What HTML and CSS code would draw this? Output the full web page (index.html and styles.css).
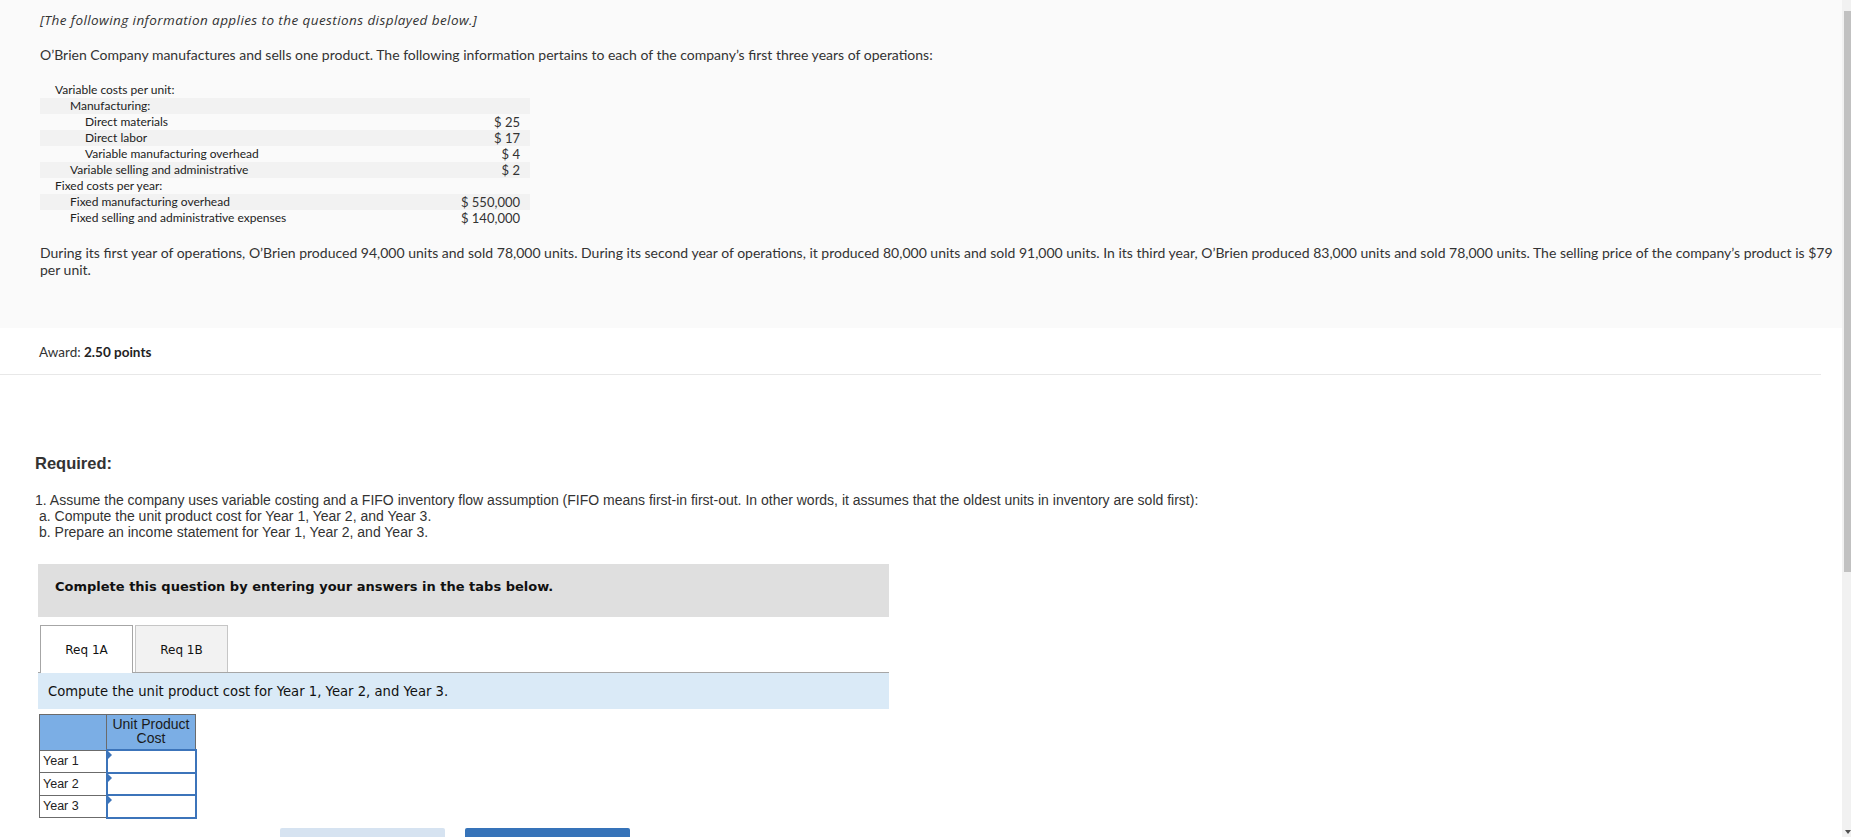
FILE: index.html
```html
<!DOCTYPE html>
<html lang="en">
<head>
<meta charset="utf-8">
<title>O'Brien Company</title>
<link rel="stylesheet" href="styles.css">
</head>
<body>
<div class="page">
  <section class="intro">
    <p class="note">[The following information applies to the questions displayed below.]</p>
    <p class="lead">O’Brien Company manufactures and sells one product. The following information pertains to each of the company’s first three years of operations:</p>
    <table class="costs">
      <tr><td class="l0">Variable costs per unit:</td><td class="val"></td></tr>
      <tr class="shade"><td class="l1">Manufacturing:</td><td class="val"></td></tr>
      <tr><td class="l2">Direct materials</td><td class="val">$ 25</td></tr>
      <tr class="shade"><td class="l2">Direct labor</td><td class="val">$ 17</td></tr>
      <tr><td class="l2">Variable manufacturing overhead</td><td class="val">$ 4</td></tr>
      <tr class="shade"><td class="l1">Variable selling and administrative</td><td class="val">$ 2</td></tr>
      <tr><td class="l0">Fixed costs per year:</td><td class="val"></td></tr>
      <tr class="shade"><td class="l1">Fixed manufacturing overhead</td><td class="val">$ 550,000</td></tr>
      <tr><td class="l1">Fixed selling and administrative expenses</td><td class="val">$ 140,000</td></tr>
    </table>
    <p class="story">During its first year of operations, O’Brien produced 94,000 units and sold 78,000 units. During its second year of operations, it produced 80,000 units and sold 91,000 units. In its third year, O’Brien produced 83,000 units and sold 78,000 units. The selling price of the company’s product is $79 per unit.</p>
  </section>

  <div class="award">Award: <b>2.50 points</b></div>

  <section class="question">
    <h3 class="req-title">Required:</h3>
    <p class="req-text">1. Assume the company uses variable costing and a FIFO inventory flow assumption (FIFO means first-in first-out. In other words, it assumes that the oldest units in inventory are sold first):<br><span class="sub">a. Compute the unit product cost for Year 1, Year 2, and Year 3.</span><br><span class="sub">b. Prepare an income statement for Year 1, Year 2, and Year 3.</span></p>

    <div class="widget">
      <div class="instr">Complete this question by entering your answers in the tabs below.</div>
      <div class="tabs">
        <div class="tab active">Req 1A</div>
        <div class="tab">Req 1B</div>
      </div>
      <div class="prompt">Compute the unit product cost for Year 1, Year 2, and Year 3.</div>
      <table class="answer">
        <tr class="head"><th class="corner"></th><th class="colh">Unit Product Cost</th></tr>
        <tr><td class="year">Year 1</td><td class="input"><span class="mark"></span></td></tr>
        <tr><td class="year">Year 2</td><td class="input"><span class="mark"></span></td></tr>
        <tr><td class="year">Year 3</td><td class="input"><span class="mark"></span></td></tr>
      </table>
      <div class="nav">
        <span class="btn prev"></span>
        <span class="btn next"></span>
      </div>
    </div>
  </section>
</div>
<div class="scrollbar"><div class="thumb"></div><div class="arrow"></div></div>
</body>
</html>
```

FILE: styles.css
```css
html, body {
  margin: 0;
  padding: 0;
  overflow: hidden;
  background: #ffffff;
}
body {
  font-family: Lato, "Open Sans", sans-serif;
  color: #333333;
}
.page {
  width: 1842px;
}
.intro {
  background: #fafafa;
  padding: 10px 8px 50px 40px;
  height: 268px;
}
.note {
  margin: 0;
  font-family: "Open Sans", Lato, sans-serif;
  font-style: italic;
  font-size: 13.5px;
  letter-spacing: 0.42px;
  line-height: 20px;
}
.lead {
  margin: 15px 0 0;
  font-size: 14px;
  line-height: 20px;
}
.costs {
  margin-top: 17px;
  border-collapse: collapse;
  width: 490px;
  font-size: 12px;
  color: #222;
}
.costs td {
  height: 16px;
  padding: 0;
  line-height: 16px;
  white-space: nowrap;
}
.costs tr.shade td {
  background: #f2f2f2;
}
.costs .l0 { padding-left: 15px; }
.costs .l1 { padding-left: 30px; }
.costs .l2 { padding-left: 45px; }
.costs .val {
  text-align: right;
  padding-right: 10px;
  font-size: 13px;
  color: #333;
}
.story {
  margin: 18px 0 0;
  font-size: 14px;
  line-height: 17px;
}
.award {
  font-size: 13.5px;
  line-height: 20px;
  padding: 14px 0 12px 39px;
  width: 1782px;
  border-bottom: 1px solid #e8e8e8;
}
.award b {
  font-weight: 700;
  color: #222;
}
.question {
  padding-left: 35px;
  font-family: "Liberation Sans", Arial, sans-serif;
}
.req-title {
  margin: 78px 0 0;
  font-size: 16.5px;
  line-height: 20px;
  font-weight: 700;
  color: #333;
}
.req-text {
  margin: 19px 0 0;
  font-size: 14px;
  line-height: 16px;
  color: #333;
}
.req-text .sub {
  padding-left: 4px;
}
.widget {
  margin: 24px 0 0 3px;
  width: 851px;
  font-family: "DejaVu Sans", Verdana, sans-serif;
  color: #111;
}
.instr {
  background: #dfdfdf;
  padding: 15px 17px 22px;
  font-size: 13px;
  font-weight: 700;
  line-height: 16px;
}
.tabs {
  display: flex;
  gap: 2px;
  margin-top: 8px;
  padding-left: 2px;
  border-bottom: 1px solid #a6a6a6;
  height: 47px;
}
.tab {
  width: 91px;
  height: 46px;
  border: 1px solid #c6c6c6;
  border-bottom: none;
  background: #f2f2f2;
  font-size: 12px;
  line-height: 48px;
  text-align: center;
}
.tab.active {
  background: #ffffff;
  border-color: #a6a6a6;
  height: 47px;
  margin-bottom: -1px;
}
.prompt {
  background: #daeaf7;
  height: 36px;
  line-height: 38px;
  padding-left: 10px;
  font-size: 13.2px;
}
.answer {
  margin: 5px 0 0 1px;
  border-collapse: collapse;
  font-family: "Liberation Sans", Arial, sans-serif;
  font-size: 12.5px;
  color: #222;
}
.answer th, .answer td {
  border: 1px solid #6b6b6b;
  padding: 0;
}
.answer .head th {
  background: #7baee5;
  height: 32px;
  font-weight: 400;
  line-height: 14px;
  vertical-align: top;
}
.answer .corner { width: 66px; }
.answer .colh {
  width: 88px;
  text-align: center;
  padding: 2px 0 0;
  font-size: 14px;
  color: #1a1a1a;
}
.answer .year {
  height: 21.5px;
  padding-left: 3px;
  text-align: left;
}
.answer .input {
  position: relative;
  width: 88px;
  border: 2px solid #3c74ba;
  box-sizing: border-box;
  background: #fff;
}
.answer .mark {
  position: absolute;
  left: 0;
  top: 0;
  width: 0;
  height: 0;
  border-top: 4px solid transparent;
  border-bottom: 4px solid transparent;
  border-left: 4px solid #3c74ba;
}
.nav {
  display: flex;
  gap: 20px;
  margin: 9px 0 0 242px;
}
.btn {
  display: block;
  width: 165px;
  height: 32px;
  border-radius: 2px 2px 0 0;
}
.btn.prev { background: #d6e3f1; }
.btn.next { background: #3673b9; }
.scrollbar {
  position: fixed;
  top: 0;
  right: 0;
  width: 9px;
  height: 837px;
  background: #f1f1f1;
}
.scrollbar .thumb {
  position: absolute;
  left: 2px;
  right: 0;
  top: 11px;
  height: 561px;
  background: #c1c1c1;
}
.scrollbar .arrow {
  position: absolute;
  left: 3px;
  bottom: 3px;
  width: 0;
  height: 0;
  border-left: 3px solid transparent;
  border-right: 3px solid transparent;
  border-top: 4px solid #505050;
}
```
